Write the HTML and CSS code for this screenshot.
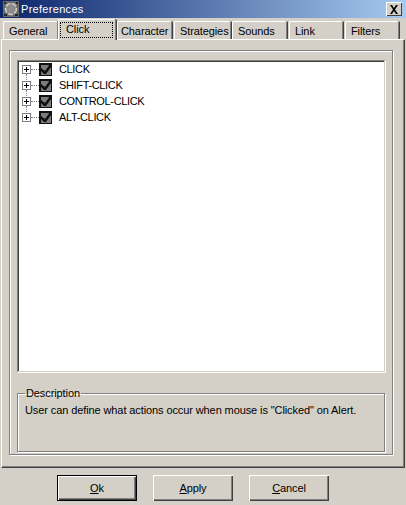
FILE: index.html
```html
<!DOCTYPE html>
<html lang="en">
<head>
<meta charset="utf-8">
<title>Preferences</title>
<link rel="stylesheet" href="styles.css">
</head>
<body>
<div class="window">
  <header class="titlebar">
    <svg class="app-icon" width="16" height="16" viewBox="0 0 16 16">
      <rect width="16" height="16" fill="#6a6a6a"/>
      <circle cx="8" cy="8" r="5.5" fill="#8c8c8c" stroke="#d4d0c8" stroke-width="1.5" stroke-dasharray="5 1.5"/>
      <path d="M1 14h3M12 14h3M1 2h2M13 2h2" stroke="#111" stroke-width="1.5"/>
    </svg>
    <span class="title">Preferences</span>
    <button class="close" type="button" aria-label="Close">
      <svg width="10" height="9" viewBox="0 0 10 9"><path d="M1 0h2l2 3 2-3h2L6 4.500 9 9H7L5 6 3 9H1l3-4.500z" fill="#000"/></svg>
    </button>
  </header>
  <nav class="tabs">
    <div class="tab w-general">General</div>
    <div class="tab tab-active w-click"><span class="focus">Click</span></div>
    <div class="tab w-character">Character</div>
    <div class="tab w-strategies">Strategies</div>
    <div class="tab w-sounds">Sounds</div>
    <div class="tab w-link">Link</div>
    <div class="tab w-filters">Filters</div>
  </nav>
  <main class="page">
    <div class="frame">
      <ul class="tree">
        <li class="node">
          <span class="expander"></span><span class="dots"></span>
          <svg class="check" width="13" height="13" viewBox="0 0 13 13"><rect width="13" height="13" fill="#111"/><rect x="2" y="2" width="10" height="10" fill="#7c7c7c"/><path d="M2 5l4 3 5-7h1v3l-5 7H5L2 8z" fill="#111"/></svg>
          <span class="label">CLICK</span>
        </li>
        <li class="node">
          <span class="expander"></span><span class="dots"></span>
          <svg class="check" width="13" height="13" viewBox="0 0 13 13"><rect width="13" height="13" fill="#111"/><rect x="2" y="2" width="10" height="10" fill="#7c7c7c"/><path d="M2 5l4 3 5-7h1v3l-5 7H5L2 8z" fill="#111"/></svg>
          <span class="label">SHIFT-CLICK</span>
        </li>
        <li class="node">
          <span class="expander"></span><span class="dots"></span>
          <svg class="check" width="13" height="13" viewBox="0 0 13 13"><rect width="13" height="13" fill="#111"/><rect x="2" y="2" width="10" height="10" fill="#7c7c7c"/><path d="M2 5l4 3 5-7h1v3l-5 7H5L2 8z" fill="#111"/></svg>
          <span class="label">CONTROL-CLICK</span>
        </li>
        <li class="node last">
          <span class="expander"></span><span class="dots"></span>
          <svg class="check" width="13" height="13" viewBox="0 0 13 13"><rect width="13" height="13" fill="#111"/><rect x="2" y="2" width="10" height="10" fill="#7c7c7c"/><path d="M2 5l4 3 5-7h1v3l-5 7H5L2 8z" fill="#111"/></svg>
          <span class="label">ALT-CLICK</span>
        </li>
      </ul>
      <fieldset class="desc">
        <legend>Description</legend>
        <p>User can define what actions occur when mouse is "Clicked" on Alert.</p>
      </fieldset>
    </div>
  </main>
  <footer class="actions">
    <button class="btn btn-default" type="button"><u>O</u>k</button>
    <button class="btn" type="button"><u>A</u>pply</button>
    <button class="btn" type="button"><u>C</u>ancel</button>
  </footer>
</div>
</body>
</html>
```
FILE: styles.css
```css
* { box-sizing: border-box; }
html, body { margin: 0; padding: 0; }
body {
  width: 406px;
  height: 505px;
  overflow: hidden;
  background: #d4d0c8;
  font-family: "Liberation Sans", Arial, sans-serif;
  font-size: 11px;
  letter-spacing: -0.1px;
  color: #000;
}
.window { display: flex; flex-direction: column; height: 505px; }

.titlebar {
  display: flex;
  align-items: center;
  height: 18px;
  flex: none;
  padding: 0 4px 0 3px;
  background: linear-gradient(to right, #0a246a, #a6caf0);
}
.app-icon { flex: none; }
.title { margin-left: 2px; color: #fff; flex: 1; line-height: 16px; letter-spacing: 0.3px; }
.close {
  width: 16px;
  height: 14px;
  padding: 0;
  display: flex;
  align-items: center;
  justify-content: center;
  background: #d4d0c8;
  border: 0;
  box-shadow: inset 1px 1px 0 #fff, inset -1px -1px 0 #404040;
}

.tabs {
  display: flex;
  align-items: flex-end;
  flex: none;
  height: 21px;
  padding-left: 3px;
}
.tab {
  flex: none;
  height: 18px;
  padding: 2px 0 0 5px;
  line-height: 15px;
  border-top: 1px solid #fff;
  border-left: 1px solid #fff;
  border-right: 1px solid #808080;
  box-shadow: 1px 0 0 #404040;
  border-top-left-radius: 2px;
  border-top-right-radius: 2px;
}
.w-general { width: 55px; }
.w-click { width: 58px; }
.w-character { width: 55px; margin-left: 1px; padding-left: 3px; }
.w-strategies { width: 57px; margin-left: 2px; }
.w-sounds { width: 55px; margin-left: 1px; }
.w-link { width: 54px; margin-left: 2px; }
.w-filters { width: 54px; margin-left: 2px; }
.tab-active {
  position: relative;
  z-index: 1;
  height: 21px;
  margin-bottom: -1px;
  padding: 2px 2px 3px 1px;
  background: #d4d0c8;
}
.focus {
  display: block;
  height: 16px;
  padding-left: 5px;
  line-height: 13px;
  border: 1px dotted #000;
}

.page {
  flex: none;
  height: 429px;
  margin: 0 1px;
  padding: 10px 10px 12px 7px;
  border-top: 1px solid #fff;
  border-left: 1px solid #fff;
  border-right: 1px solid #404040;
  border-bottom: 1px solid #404040;
  box-shadow: inset -1px -1px 0 #808080;
}
.frame {
  width: 384px;
  height: 405px;
  padding: 9px 7px 3px 7px;
  border: 1px solid #808080;
  box-shadow: inset 1px 1px 0 #fff, 1px 1px 0 #fff;
}
.tree {
  list-style: none;
  margin: 0;
  padding: 0 0 0 1px;
  height: 312px;
  width: 368px;
  background: #fff;
  border: 1px solid #808080;
  border-right-color: #d4d0c8;
  border-bottom-color: #d4d0c8;
  box-shadow: inset 1px 1px 0 #404040, 1px 1px 0 #fff;
}
.node {
  position: relative;
  display: flex;
  align-items: center;
  height: 16px;
  padding-left: 3px;
}
.node::before {
  content: "";
  position: absolute;
  left: 7px;
  top: 13px;
  height: 12px;
  border-left: 1px dotted #808080;
}
.node.last::before { display: none; }
.expander {
  position: relative;
  flex: none;
  width: 9px;
  height: 9px;
  border: 1px solid #808080;
  background: linear-gradient(#000, #000) center / 5px 1px no-repeat,
              linear-gradient(#000, #000) center / 1px 5px no-repeat,
              #fff;
}
.dots {
  flex: none;
  width: 8px;
  height: 0;
  border-top: 1px dotted #808080;
}
.check { flex: none; }
.label { margin-left: 7px; line-height: 14px; letter-spacing: -0.35px; }

.desc {
  margin: 15px 0 0 0;
  padding: 0 0 0 7px;
  width: 368px;
  height: 65px;
  border: 1px solid #808080;
  box-shadow: inset 1px 1px 0 #fff, 1px 1px 0 #fff;
}
.desc legend {
  margin-left: 0;
  padding: 0 1px;
  line-height: 13px;
}
.desc p { margin: 3px 0 0 0; line-height: 14px; white-space: nowrap; }

.actions {
  flex: none;
  display: flex;
  gap: 16px;
  padding: 7px 0 0 57px;
}
.btn {
  width: 80px;
  height: 26px;
  padding: 0;
  font: inherit;
  letter-spacing: inherit;
  color: #000;
  background: #d4d0c8;
  border: 0;
  box-shadow: inset 1px 1px 0 #fff, inset -1px -1px 0 #404040, inset -2px -2px 0 #808080;
}
.btn-default {
  border: 1px solid #000;
}
```
